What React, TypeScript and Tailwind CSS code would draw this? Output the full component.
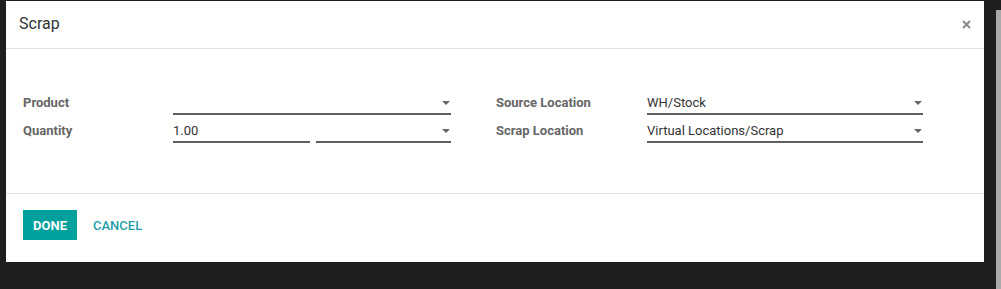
const font = { fontFamily: "Roboto, 'Liberation Sans', sans-serif" };

function Caret() {
  return (
    <svg width="8" height="4" viewBox="0 0 8 4" className="shrink-0">
      <path d="M0 0h8L4 4z" fill="#666" />
    </svg>
  );
}

function Field({ value, width, caret = true }: { value?: string; width: string; caret?: boolean }) {
  return (
    <div className={`${width} h-[26px] flex items-center justify-between border-b-2 border-[#5f5f5f] pr-[1px] pt-[3px]`}>
      <span className="text-[13px] text-[#333] leading-none">{value}</span>
      {caret && <Caret />}
    </div>
  );
}

function Label({ children }: { children: string }) {
  return <div className="text-[13px] font-bold text-[#666] leading-none">{children}</div>;
}

export default function App() {
  return (
    <div className="w-[1001px] h-[289px] bg-[#1e1e1e] flex pt-[1px] pl-[6px]" style={font}>
      <div className="w-[978px] h-[261px] bg-white flex flex-col">
        {/* header */}
        <div className="h-[48px] border-b border-[#dee2e6] flex items-center justify-between pl-[13px] pr-[13px]">
          <h4 className="text-[16px] text-[#333] pb-[1px]">Scrap</h4>
          <svg width="9" height="9" viewBox="0 0 9 9" className="mb-[1px]">
            <path d="M1 1l7 7M8 1L1 8" stroke="#8a8a8a" strokeWidth="2" />
          </svg>
        </div>

        {/* body */}
        <div className="pl-[17px] pt-[40px] pb-[50px] border-b border-[#e2e2e2] flex">
          <div className="grid grid-cols-[150px_278px] gap-y-[2px] items-center">
            <Label>Product</Label>
            <Field width="w-[278px]" />
            <Label>Quantity</Label>
            <div className="flex gap-[6px]">
              <Field value="1.00" width="w-[137px]" caret={false} />
              <Field width="w-[135px]" />
            </div>
          </div>
          <div className="ml-[45px] grid grid-cols-[151px_276px] gap-y-[2px] items-center">
            <Label>Source Location</Label>
            <Field value="WH/Stock" width="w-[276px]" />
            <Label>Scrap Location</Label>
            <Field value="Virtual Locations/Scrap" width="w-[276px]" />
          </div>
        </div>

        {/* footer */}
        <div className="flex items-center gap-[16px] pl-[17px] pt-[16px]">
          <button className="h-[30px] w-[54px] bg-[#00a09d] text-white text-[13px] font-bold pt-[1px]">DONE</button>
          <button className="text-[13px] font-medium text-[#1f9fa8] pt-[1px]">CANCEL</button>
        </div>
      </div>
      <div className="ml-auto mt-[9px] w-[5px] h-[279px] bg-[#a9a9a9]" />
    </div>
  );
}
